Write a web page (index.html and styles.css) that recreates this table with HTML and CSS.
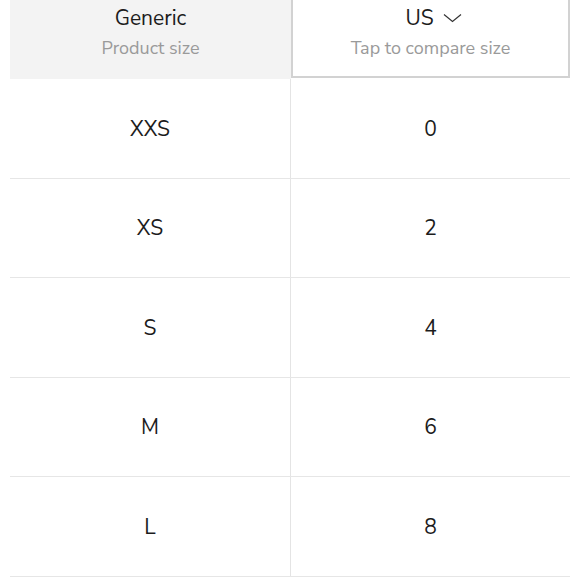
FILE: index.html
```html
<!DOCTYPE html>
<html>
<head>
<meta charset="utf-8">
<link rel="stylesheet" href="styles.css">
</head>
<body>
<div class="table">
  <div class="head">
    <div class="hcell generic">
      <div class="title">Generic</div>
      <div class="sub">Product size</div>
    </div>
    <div class="hcell us">
      <div class="title us-title">US <svg class="chev" width="19" height="10" viewBox="0 0 19 10"><path d="M1 1.5 L9.5 8.5 L18 1.5" fill="none" stroke="#333" stroke-width="1.2"/></svg></div>
      <div class="sub">Tap to compare size</div>
    </div>
  </div>
  <div class="row"><div class="cell">XXS</div><div class="cell right">0</div></div>
  <div class="row"><div class="cell">XS</div><div class="cell right">2</div></div>
  <div class="row"><div class="cell">S</div><div class="cell right">4</div></div>
  <div class="row"><div class="cell">M</div><div class="cell right">6</div></div>
  <div class="row"><div class="cell">L</div><div class="cell right">8</div></div>
</div>
</body>
</html>
```
FILE: styles.css
```css
html, body {
  margin: 0;
  padding: 0;
  background: #fff;
  overflow: hidden;
}
body {
  font-family: "Nunito Sans", "Lato", "Noto Sans", sans-serif;
  color: #1a1a1a;
}
.table {
  margin-left: 10px;
  width: 560px;
}
.head {
  display: grid;
  grid-template-columns: 281px 279px;
  height: 79px;
}
.hcell {
  display: flex;
  flex-direction: column;
  align-items: center;
  box-sizing: border-box;
}
.generic {
  background: #f3f3f3;
  padding-top: 6px;
}
.us {
  background: #fff;
  border: 2px solid #d2d2d2;
  border-top: none;
  height: 78px;
  padding-top: 6px;
}
.title {
  font-size: 21px;
  line-height: 25px;
  color: #1c1c1c;
  display: flex;
  align-items: center;
  gap: 6px;
}
.us-title {
  gap: 9px;
  padding-left: 6px;
}
.chev {
  margin-top: -2px;
}
.sub {
  font-size: 18px;
  line-height: 22px;
  margin-top: 6px;
  color: #9a9a9a;
}
.row {
  display: grid;
  grid-template-columns: 280px 280px;
  height: 99.5px;
  box-sizing: border-box;
  border-bottom: 1px solid #e6e6e6;
}
.cell {
  display: flex;
  align-items: center;
  justify-content: center;
  font-size: 21px;
  color: #1c1c1c;
  padding-top: 1px;
}
.right {
  border-left: 1px solid #e4e4e4;
}
```
